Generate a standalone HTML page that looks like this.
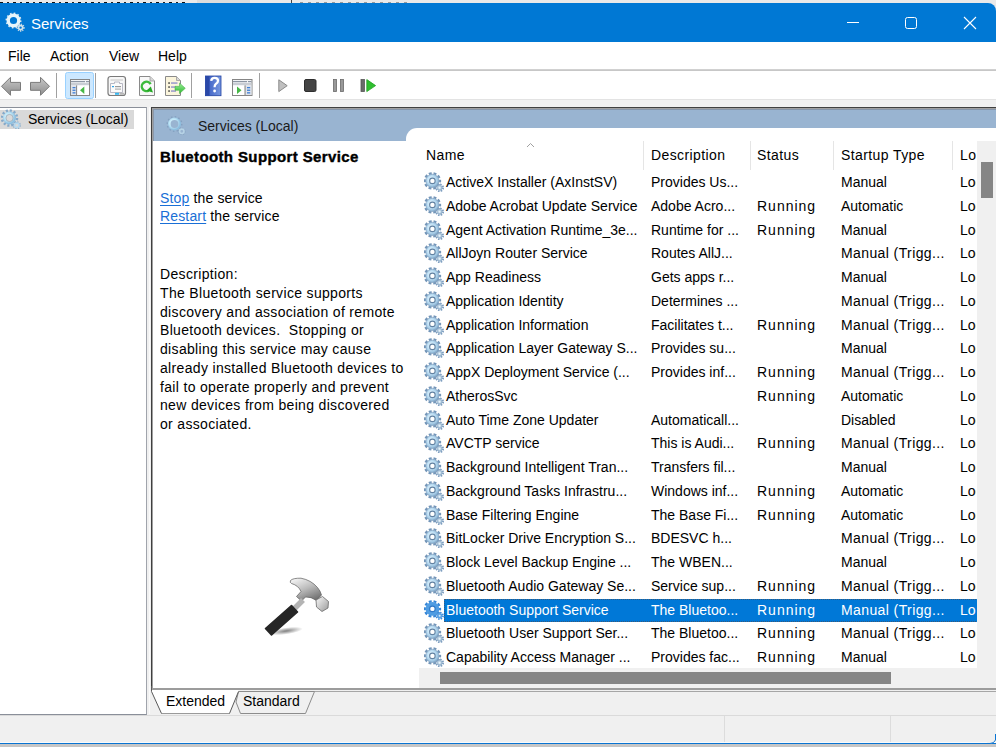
<!DOCTYPE html>
<html><head><meta charset="utf-8">
<style>
*{margin:0;padding:0;box-sizing:border-box}
html,body{width:996px;height:747px;overflow:hidden;background:#fff}
body{position:relative;font-family:"Liberation Sans",sans-serif;font-size:14px;color:#000}
.a{position:absolute}
#topstrip{left:0;top:0;width:996px;height:12px;background:#e9e9e9}
#title{left:0;top:3px;width:996px;height:39px;background:#0078d4;border-top-right-radius:8px;color:#fff}
#title .t{left:31px;top:11px;font-size:15px;line-height:20px;color:#fff}
#menu{left:0;top:42px;width:996px;height:28px;background:#fff}
#menu span{position:absolute;top:5px;line-height:18px}
#menuline{left:0;top:69px;width:996px;height:2px;background:linear-gradient(#d6d6d6,#c2c2c2)}
#toolbar{left:0;top:71px;width:996px;height:28px;background:#fff}
#tbline{left:0;top:99px;width:996px;height:1px;background:#e3e3e3}
#mid{left:0;top:100px;width:996px;height:615px;background:#f0f0f0}
#leftpane{left:0;top:107px;width:147px;height:608px;background:#fff;border-top:1px solid #8a8f99;border-right:1px solid #a0a4ac;border-bottom:1px solid #8a8f99}
#frame{left:151px;top:107px;width:845px;height:583px;border-left:1px solid #404040;border-top:1px solid #404040;background:#fff}
#frameinner{left:152px;top:108px;width:844px;height:582px;border-left:1px solid #a0a0a0;border-top:1px solid #a0a0a0}
#band{left:153px;top:109px;width:843px;height:32px;background:#99b4d1;border-top:1px solid #8595aa;border-left:1px solid #8a98aa}
#tabwhite{left:406px;top:128px;width:600px;height:40px;background:#fff;border-top-left-radius:11px}
.sep{position:absolute;width:1px;background:#a0a0a0}
.lst{left:419px;top:141px;width:558px;height:527px;background:#fff;overflow:hidden}
.row{position:absolute;left:0;width:558px;height:24px;line-height:24px;white-space:nowrap}
.row span{position:absolute;top:0}
.hdr{position:absolute;left:0;top:0;width:558px;height:29px}
.hdr span{position:absolute;top:5px;line-height:18px;white-space:nowrap;letter-spacing:0.4px}
.hsep{position:absolute;top:0;width:1px;height:29px;background:#e5e5e5}
.sel{position:absolute;left:25px;width:540px;background:#0078d7;outline:1px dotted #3a5a7a;outline-offset:-1px}
</style></head>
<body>
<svg width="0" height="0" style="position:absolute">
 <defs>
  <radialGradient id="gg" cx="0.42" cy="0.42" r="0.62">
   <stop offset="0" stop-color="#ffffff"/>
   <stop offset="0.45" stop-color="#c2e2f6"/>
   <stop offset="0.8" stop-color="#9cc3e0"/>
   <stop offset="1" stop-color="#7398bb"/>
  </radialGradient>
  <radialGradient id="gs" cx="0.45" cy="0.45" r="0.6">
   <stop offset="0" stop-color="#e6f3fb"/>
   <stop offset="1" stop-color="#7c9fbf"/>
  </radialGradient>
  <symbol id="gear" viewBox="0 0 20 20">
   <circle cx="8.4" cy="8.9" r="7.6" fill="none" stroke="#7395b8" stroke-width="2.3" stroke-dasharray="2.9 1.875" stroke-dashoffset="1.45"/>
   <circle cx="8.4" cy="8.9" r="6.6" fill="url(#gg)" stroke="#86a6c4" stroke-width="0.8"/>
   <circle cx="8.4" cy="8.9" r="3.3" fill="#6282a2"/>
   <circle cx="8.4" cy="8.9" r="2.2" fill="#fff"/>
   <circle cx="15.7" cy="15.8" r="3.4" fill="none" stroke="#7f9fc0" stroke-width="1.9" stroke-dasharray="1.5 1.17"/>
   <circle cx="15.7" cy="15.8" r="2.7" fill="url(#gs)"/>
   <circle cx="15.7" cy="15.8" r="0.9" fill="#e8f4fc"/>
  </symbol>
  <radialGradient id="rg" cx="0.4" cy="0.4" r="0.65">
   <stop offset="0" stop-color="#e8fbff"/>
   <stop offset="0.6" stop-color="#bfe6f7"/>
   <stop offset="1" stop-color="#8dbfe0"/>
  </radialGradient>
  <symbol id="gear2" viewBox="0 0 20 20">
   <circle cx="8.5" cy="9" r="7.5" fill="none" stroke="#86a9c9" stroke-width="2.6" stroke-dasharray="2.1 1.83"/>
   <circle cx="8.5" cy="9" r="5.1" fill="none" stroke="url(#rg)" stroke-width="2.8"/>
   <circle cx="8.5" cy="9" r="3.6" fill="none" stroke="#7890a8" stroke-width="0.7" stroke-opacity="0.7"/>
   <circle cx="15.8" cy="16.3" r="3.1" fill="none" stroke="#8fb1cf" stroke-width="2" stroke-dasharray="1.3 1.13"/>
   <circle cx="15.8" cy="16.3" r="2.2" fill="none" stroke="#b5d8ee" stroke-width="1.6"/>
  </symbol>
  <symbol id="gearw" viewBox="0 0 20 20">
   <circle cx="8.5" cy="8.5" r="7.1" fill="none" stroke="#d8e8f0" stroke-width="1.8" stroke-dasharray="1.6 2.12"/>
   <circle cx="8.5" cy="8.5" r="5.3" fill="none" stroke="#e6f5fb" stroke-width="3.4"/>
   <circle cx="15.6" cy="15.6" r="3.3" fill="none" stroke="#c8d8e2" stroke-width="1.6" stroke-dasharray="1.2 1.0"/>
   <circle cx="15.6" cy="15.6" r="2.0" fill="none" stroke="#d0e4ee" stroke-width="1.6"/>
  </symbol>
  <symbol id="gearb" viewBox="0 0 20 20">
   <circle cx="8.5" cy="9" r="7.2" fill="none" stroke="#7f9cbc" stroke-width="1.6" stroke-dasharray="1.5 2.27" stroke-opacity="0.8"/>
   <circle cx="8.5" cy="9" r="5.2" fill="none" stroke="url(#rg)" stroke-width="2.6"/>
   <circle cx="15.8" cy="16.3" r="3.1" fill="none" stroke="#87a5c2" stroke-width="1.6" stroke-dasharray="1.1 1.33"/>
   <circle cx="15.8" cy="16.3" r="2.2" fill="none" stroke="#b7d3e6" stroke-width="1.6"/>
  </symbol>
  <symbol id="gearsel" viewBox="0 0 20 20">
   <circle cx="8.4" cy="8.9" r="7.6" fill="none" stroke="#3585d6" stroke-width="2.3" stroke-dasharray="2.9 1.875" stroke-dashoffset="1.45"/>
   <circle cx="8.4" cy="8.9" r="6.9" fill="#4f9ce2"/>
   <circle cx="8.4" cy="8.9" r="3.3" fill="#2f78c8"/>
   <circle cx="8.4" cy="8.9" r="2.2" fill="#fff"/>
   <circle cx="15.7" cy="15.8" r="3.3" fill="none" stroke="#3d8ad8" stroke-width="1.8" stroke-dasharray="1.4 1.19"/>
   <circle cx="15.7" cy="15.8" r="2.8" fill="#5aa2e4"/>
   <circle cx="15.7" cy="15.8" r="1.0" fill="#d8ecfa"/>
  </symbol>
 </defs>
</svg>

<div class="a" id="topstrip"></div>
<div class="a" id="title">
 <svg class="a" style="left:4.6px;top:8.5px" width="20" height="20"><use href="#gearw"/></svg>
 <div class="a t">Services</div>
 <svg class="a" style="left:847px;top:19px" width="13" height="2"><rect x="0" y="0" width="12" height="1" fill="#fff"/></svg>
 <svg class="a" style="left:904px;top:13px" width="14" height="14"><rect x="1.5" y="1.5" width="11" height="11" rx="2" fill="none" stroke="#fff" stroke-width="1"/></svg>
 <svg class="a" style="left:963px;top:13px" width="14" height="14"><path d="M1 1L13 13M13 1L1 13" stroke="#fff" stroke-width="1.1"/></svg>
</div>

<div class="a" id="menu">
 <span style="left:8px">File</span>
 <span style="left:50px">Action</span>
 <span style="left:109px">View</span>
 <span style="left:158px">Help</span>
</div>
<div class="a" id="menuline"></div>
<div class="a" id="toolbar"></div>
<div class="a" id="tbline"></div>
<div class="a" id="mid"></div>

<div class="a" id="leftpane">
 <div class="a" style="left:0;top:2px;width:134px;height:19px;background:#d9d9d9"></div>
 <svg class="a" style="left:1.4px;top:1px" width="20" height="20"><use href="#gear2"/></svg>
 <div class="a" style="left:28px;top:3px;line-height:17px">Services (Local)</div>
</div>

<div class="a" style="left:149px;top:107px;width:1px;height:607px;background:#fafafa"></div>
<div class="a" id="frame"></div>
<div class="a" id="frameinner"></div>
<div class="a" id="band">
 <svg class="a" style="left:12.3px;top:5px" width="20" height="20"><use href="#gearb"/></svg>
 <div class="a" style="left:44px;top:7px;line-height:18px;color:#1a1a1a">Services (Local)</div>
</div>
<div class="a" id="tabwhite"></div>

<div class="a" style="left:160px;top:148px;font-weight:bold;font-size:15px;letter-spacing:0.38px;line-height:18px;-webkit-text-stroke:0.4px #000">Bluetooth Support Service</div>
<div class="a" style="left:160px;top:188.5px;line-height:18.75px;letter-spacing:0.15px;color:#000">
 <span style="color:#1a6fd6;text-decoration:underline;text-underline-offset:1.5px">Stop</span> the service<br>
 <span style="color:#1a6fd6;text-decoration:underline;text-underline-offset:1.5px">Restart</span> the service
</div>
<div class="a" style="left:160px;top:265px;line-height:18.75px;letter-spacing:0.33px;white-space:nowrap">
Description:<br>The Bluetooth service supports<br>discovery and association of remote<br>Bluetooth devices.&nbsp; Stopping or<br>disabling this service may cause<br>already installed Bluetooth devices to<br>fail to operate properly and prevent<br>new devices from being discovered<br>or associated.
</div>

<div class="a lst" id="list">
 <div class="hdr">
  <span style="left:7px">Name</span>
  <span style="left:232px">Description</span>
  <span style="left:338px">Status</span>
  <span style="left:422px">Startup Type</span>
  <span style="left:541px;width:16px;overflow:hidden">Log On As</span>
  <div class="hsep" style="left:224px"></div>
  <div class="hsep" style="left:331px"></div>
  <div class="hsep" style="left:414px"></div>
  <div class="hsep" style="left:533px"></div>
  <svg class="a" style="left:107px;top:1px" width="9" height="6"><path d="M1 5L4.5 1.5L8 5" fill="none" stroke="#a0a0a0" stroke-width="1"/></svg>
 </div>
 <div id="rows"><!--ROWS--><div class="row" style="top:29.0px"><svg class="a" style="left:5px;top:2px" width="20" height="20"><use href="#gear"/></svg><span style="left:27px">ActiveX Installer (AxInstSV)</span><span style="left:232px">Provides Us...</span><span style="left:338px"></span><span style="left:422px">Manual</span><span style="left:541px;width:16px;overflow:hidden">Local System</span></div>
<div class="row" style="top:52.8px"><svg class="a" style="left:5px;top:2px" width="20" height="20"><use href="#gear"/></svg><span style="left:27px">Adobe Acrobat Update Service</span><span style="left:232px">Adobe Acro...</span><span style="left:338px;letter-spacing:1px">Running</span><span style="left:422px">Automatic</span><span style="left:541px;width:16px;overflow:hidden">Local System</span></div>
<div class="row" style="top:76.5px"><svg class="a" style="left:5px;top:2px" width="20" height="20"><use href="#gear"/></svg><span style="left:27px">Agent Activation Runtime_3e...</span><span style="left:232px">Runtime for ...</span><span style="left:338px;letter-spacing:1px">Running</span><span style="left:422px">Manual</span><span style="left:541px;width:16px;overflow:hidden">Local System</span></div>
<div class="row" style="top:100.2px"><svg class="a" style="left:5px;top:2px" width="20" height="20"><use href="#gear"/></svg><span style="left:27px">AllJoyn Router Service</span><span style="left:232px">Routes AllJ...</span><span style="left:338px"></span><span style="left:422px;letter-spacing:0.4px">Manual (Trigg...</span><span style="left:541px;width:16px;overflow:hidden">Local System</span></div>
<div class="row" style="top:124.0px"><svg class="a" style="left:5px;top:2px" width="20" height="20"><use href="#gear"/></svg><span style="left:27px">App Readiness</span><span style="left:232px">Gets apps r...</span><span style="left:338px"></span><span style="left:422px">Manual</span><span style="left:541px;width:16px;overflow:hidden">Local System</span></div>
<div class="row" style="top:147.8px"><svg class="a" style="left:5px;top:2px" width="20" height="20"><use href="#gear"/></svg><span style="left:27px">Application Identity</span><span style="left:232px">Determines ...</span><span style="left:338px"></span><span style="left:422px;letter-spacing:0.4px">Manual (Trigg...</span><span style="left:541px;width:16px;overflow:hidden">Local System</span></div>
<div class="row" style="top:171.5px"><svg class="a" style="left:5px;top:2px" width="20" height="20"><use href="#gear"/></svg><span style="left:27px">Application Information</span><span style="left:232px">Facilitates t...</span><span style="left:338px;letter-spacing:1px">Running</span><span style="left:422px;letter-spacing:0.4px">Manual (Trigg...</span><span style="left:541px;width:16px;overflow:hidden">Local System</span></div>
<div class="row" style="top:195.2px"><svg class="a" style="left:5px;top:2px" width="20" height="20"><use href="#gear"/></svg><span style="left:27px">Application Layer Gateway S...</span><span style="left:232px">Provides su...</span><span style="left:338px"></span><span style="left:422px">Manual</span><span style="left:541px;width:16px;overflow:hidden">Local System</span></div>
<div class="row" style="top:219.0px"><svg class="a" style="left:5px;top:2px" width="20" height="20"><use href="#gear"/></svg><span style="left:27px">AppX Deployment Service (...</span><span style="left:232px">Provides inf...</span><span style="left:338px;letter-spacing:1px">Running</span><span style="left:422px;letter-spacing:0.4px">Manual (Trigg...</span><span style="left:541px;width:16px;overflow:hidden">Local System</span></div>
<div class="row" style="top:242.8px"><svg class="a" style="left:5px;top:2px" width="20" height="20"><use href="#gear"/></svg><span style="left:27px">AtherosSvc</span><span style="left:232px"></span><span style="left:338px;letter-spacing:1px">Running</span><span style="left:422px">Automatic</span><span style="left:541px;width:16px;overflow:hidden">Local System</span></div>
<div class="row" style="top:266.5px"><svg class="a" style="left:5px;top:2px" width="20" height="20"><use href="#gear"/></svg><span style="left:27px">Auto Time Zone Updater</span><span style="left:232px">Automaticall...</span><span style="left:338px"></span><span style="left:422px">Disabled</span><span style="left:541px;width:16px;overflow:hidden">Local System</span></div>
<div class="row" style="top:290.2px"><svg class="a" style="left:5px;top:2px" width="20" height="20"><use href="#gear"/></svg><span style="left:27px">AVCTP service</span><span style="left:232px">This is Audi...</span><span style="left:338px;letter-spacing:1px">Running</span><span style="left:422px;letter-spacing:0.4px">Manual (Trigg...</span><span style="left:541px;width:16px;overflow:hidden">Local System</span></div>
<div class="row" style="top:314.0px"><svg class="a" style="left:5px;top:2px" width="20" height="20"><use href="#gear"/></svg><span style="left:27px">Background Intelligent Tran...</span><span style="left:232px">Transfers fil...</span><span style="left:338px"></span><span style="left:422px">Manual</span><span style="left:541px;width:16px;overflow:hidden">Local System</span></div>
<div class="row" style="top:337.8px"><svg class="a" style="left:5px;top:2px" width="20" height="20"><use href="#gear"/></svg><span style="left:27px">Background Tasks Infrastru...</span><span style="left:232px">Windows inf...</span><span style="left:338px;letter-spacing:1px">Running</span><span style="left:422px">Automatic</span><span style="left:541px;width:16px;overflow:hidden">Local System</span></div>
<div class="row" style="top:361.5px"><svg class="a" style="left:5px;top:2px" width="20" height="20"><use href="#gear"/></svg><span style="left:27px">Base Filtering Engine</span><span style="left:232px">The Base Fi...</span><span style="left:338px;letter-spacing:1px">Running</span><span style="left:422px">Automatic</span><span style="left:541px;width:16px;overflow:hidden">Local System</span></div>
<div class="row" style="top:385.2px"><svg class="a" style="left:5px;top:2px" width="20" height="20"><use href="#gear"/></svg><span style="left:27px">BitLocker Drive Encryption S...</span><span style="left:232px">BDESVC h...</span><span style="left:338px"></span><span style="left:422px;letter-spacing:0.4px">Manual (Trigg...</span><span style="left:541px;width:16px;overflow:hidden">Local System</span></div>
<div class="row" style="top:409.0px"><svg class="a" style="left:5px;top:2px" width="20" height="20"><use href="#gear"/></svg><span style="left:27px">Block Level Backup Engine ...</span><span style="left:232px">The WBEN...</span><span style="left:338px"></span><span style="left:422px">Manual</span><span style="left:541px;width:16px;overflow:hidden">Local System</span></div>
<div class="row" style="top:432.8px"><svg class="a" style="left:5px;top:2px" width="20" height="20"><use href="#gear"/></svg><span style="left:27px">Bluetooth Audio Gateway Se...</span><span style="left:232px">Service sup...</span><span style="left:338px;letter-spacing:1px">Running</span><span style="left:422px;letter-spacing:0.4px">Manual (Trigg...</span><span style="left:541px;width:16px;overflow:hidden">Local System</span></div>
<div class="sel" style="top:458.0px;height:23px"></div>
<div class="row" style="color:#fff;top:456.5px"><svg class="a" style="left:5px;top:2px" width="20" height="20"><use href="#gearsel"/></svg><span style="left:27px">Bluetooth Support Service</span><span style="left:232px">The Bluetoo...</span><span style="left:338px;letter-spacing:1px">Running</span><span style="left:422px;letter-spacing:0.4px">Manual (Trigg...</span><span style="left:541px;width:16px;overflow:hidden">Local System</span></div>
<div class="row" style="top:480.2px"><svg class="a" style="left:5px;top:2px" width="20" height="20"><use href="#gear"/></svg><span style="left:27px">Bluetooth User Support Ser...</span><span style="left:232px">The Bluetoo...</span><span style="left:338px;letter-spacing:1px">Running</span><span style="left:422px;letter-spacing:0.4px">Manual (Trigg...</span><span style="left:541px;width:16px;overflow:hidden">Local System</span></div>
<div class="row" style="top:504.0px"><svg class="a" style="left:5px;top:2px" width="20" height="20"><use href="#gear"/></svg><span style="left:27px">Capability Access Manager ...</span><span style="left:232px">Provides fac...</span><span style="left:338px;letter-spacing:1px">Running</span><span style="left:422px">Manual</span><span style="left:541px;width:16px;overflow:hidden">Local System</span></div><!--/ROWS--></div>
</div>

<!--EXTRA-->
<div class="a" style="left:0;top:2px;width:185px;height:1px;background:repeating-linear-gradient(90deg,#111 0 3px,transparent 3px 7px,#222 7px 9px,transparent 9px 13px)"></div>
<div class="a" style="left:197px;top:0;width:53px;height:3px;background:#dcdcdc"></div>
<div class="a" style="left:291px;top:0;width:1px;height:3px;background:#444"></div>
<div class="a" style="left:300px;top:2px;width:110px;height:1px;background:repeating-linear-gradient(90deg,#999 0 3px,transparent 3px 8px)"></div>

<!-- toolbar icons -->
<svg class="a" style="left:0;top:71px" width="400" height="28">
 <defs>
  <linearGradient id="arr" x1="0" y1="0" x2="0" y2="1"><stop offset="0" stop-color="#c8c8c8"/><stop offset="1" stop-color="#8e8e8e"/></linearGradient>
  <linearGradient id="hb" x1="0" y1="0" x2="1" y2="0"><stop offset="0" stop-color="#3558c0"/><stop offset="1" stop-color="#7898e0"/></linearGradient>
  <linearGradient id="ga" x1="0" y1="0" x2="0" y2="1"><stop offset="0" stop-color="#9ef09e"/><stop offset="1" stop-color="#2cb82c"/></linearGradient>
 </defs>
 <path d="M1.5 15.3L10.5 6.3V11.4H20.5V19.3H10.5V24.3Z" fill="url(#arr)" stroke="#7a7a7a" stroke-width="1"/>
 <path d="M49.5 15.3L40.5 6.3V11.4H30.5V19.3H40.5V24.3Z" fill="url(#arr)" stroke="#7a7a7a" stroke-width="1"/>
 <rect x="56" y="2" width="1" height="25" fill="#a0a0a0"/>
 <rect x="65.5" y="1.5" width="28" height="26" rx="2" fill="#cce8ff" stroke="#99d1ff"/>
 <rect x="70.5" y="8.5" width="19" height="16" fill="#f2f3f5" stroke="#858585"/>
 <rect x="71" y="10" width="14" height="1.2" fill="#8c95a3"/><rect x="86" y="10" width="3" height="1.2" fill="#8c95a3"/>
 <rect x="71" y="12" width="18" height="2.4" fill="#c9cdd4"/>
 <rect x="71" y="14.4" width="5" height="9.6" fill="#dfe3ea"/>
 <rect x="76" y="14.4" width="1.3" height="9.6" fill="#8c8c8c"/>
 <rect x="72.5" y="16" width="3" height="1.3" fill="#3f7fd6"/><rect x="72.5" y="18.6" width="3" height="1.3" fill="#3f7fd6"/><rect x="72.5" y="21.2" width="3" height="1.3" fill="#3f7fd6"/>
 <rect x="77.3" y="14.4" width="11.7" height="9.6" fill="#fff"/>
 <path d="M80 19.2L84.3 15.4V23Z" fill="#46b846"/>
 <rect x="95" y="2" width="1" height="25" fill="#a0a0a0"/>
 <rect x="108" y="5.5" width="17.5" height="19" rx="2.5" fill="#f7f7f7" stroke="#7a7a7a" stroke-width="1.2"/>
 <rect x="110.5" y="8" width="12.5" height="2" fill="#dedede"/>
 <path d="M110.5 12.5H114.5V11H119.5V12.5H122.5V21.5H110.5Z" fill="#fbfbfb" stroke="#a8a8b8" stroke-width="0.8"/>
 <rect x="112" y="15" width="2" height="1.2" fill="#2fa3e6"/><rect x="115" y="15" width="6" height="1.2" fill="#9a9a9a"/>
 <rect x="115" y="17.5" width="6" height="1.2" fill="#b0b0b0"/>
 <rect x="115" y="21.8" width="4" height="2" fill="#38b8f0"/><rect x="119.5" y="21.8" width="4.5" height="2" fill="#b8b8b8"/>
 <path d="M139.5 5.5H150L154.5 10V24.5H139.5Z" fill="#f8f8f8" stroke="#8a8a8a"/>
 <path d="M150 5.5V10H154.5" fill="#d8d8d8" stroke="#9a9a9a" stroke-width="0.8"/>
 <path d="M150.6 13.2A4.7 4.7 0 1 0 148.7 19.6" fill="none" stroke="#3cba3c" stroke-width="2.4"/>
 <path d="M146.5 19.8L153 21.5L150.8 15.5Z" fill="#25a825"/>
 <path d="M165.5 5.5H176.5L180.5 9.5V24.5H165.5Z" fill="#fbf5dc" stroke="#8a8a8a"/>
 <path d="M176.5 5.5V9.5H180.5" fill="#d8d8d8" stroke="#9a9a9a" stroke-width="0.8"/>
 <rect x="168.3" y="11.3" width="1.5" height="1.5" fill="#333"/><rect x="171" y="11.4" width="6.5" height="1.3" fill="#8a8ac8"/>
 <rect x="168.3" y="15.3" width="1.5" height="1.5" fill="#333"/><rect x="171" y="15.4" width="5" height="1.3" fill="#8a8ac8"/>
 <rect x="168.3" y="19.3" width="1.5" height="1.5" fill="#333"/><rect x="171" y="19.4" width="5" height="1.3" fill="#8a8ac8"/>
 <path d="M175 15.3H179.5V12L185.3 17.3L179.5 22.6V19.3H175Z" fill="url(#ga)" stroke="#3aa83a" stroke-width="0.5"/>
 <rect x="191" y="2" width="1" height="25" fill="#a0a0a0"/>
 <rect x="205.5" y="5" width="15.5" height="19.7" fill="url(#hb)" stroke="#2040a0" stroke-width="0.8"/>
 <rect x="205.5" y="5" width="4" height="19.7" fill="#2a48a8"/>
 <path d="M211.2 9.8Q211.5 6.8 214.6 6.8Q218 6.8 218 9.8Q218 11.8 215.8 13Q214.6 13.8 214.6 16.3" fill="none" stroke="#fff" stroke-width="2.3"/>
 <circle cx="214.6" cy="20" r="1.4" fill="#fff"/>
 <rect x="232.5" y="8.5" width="19.5" height="16" fill="#f2f3f5" stroke="#858585"/>
 <rect x="233" y="10" width="14" height="1.2" fill="#8c95a3"/><rect x="248" y="10" width="3.5" height="1.2" fill="#8c95a3"/>
 <rect x="233" y="12" width="18.5" height="2.4" fill="#c9cdd4"/>
 <rect x="233" y="14.4" width="11.5" height="9.6" fill="#fff"/>
 <path d="M237 15.4V23L241.5 19.2Z" fill="#46b846"/>
 <rect x="244.5" y="14.4" width="1.3" height="9.6" fill="#8c8c8c"/>
 <rect x="245.8" y="14.4" width="5.7" height="9.6" fill="#dfe3ea"/>
 <rect x="247" y="16" width="3.2" height="1.3" fill="#3f7fd6"/><rect x="247" y="18.6" width="3.2" height="1.3" fill="#3f7fd6"/><rect x="247" y="21.2" width="3.2" height="1.3" fill="#3f7fd6"/>
 <rect x="259" y="2" width="1" height="25" fill="#a0a0a0"/>
 <path d="M278.8 8.8L287.2 14.7L278.8 20.6Z" fill="#c0c0c0" stroke="#8a8a8a"/>
 <rect x="304.5" y="8.5" width="11.5" height="12" rx="1.5" fill="#444" stroke="#2e2e2e"/>
 <rect x="333.5" y="8.5" width="3" height="12" fill="#999" stroke="#6a6a6a" stroke-width="0.8"/>
 <rect x="340.5" y="8.5" width="3" height="12" fill="#999" stroke="#6a6a6a" stroke-width="0.8"/>
 <rect x="361" y="8.5" width="3.4" height="12" fill="#6a6a6a" stroke="#555" stroke-width="0.8"/>
 <path d="M366.8 8.6L375.6 14.6L366.8 20.6Z" fill="#2fbf2f" stroke="#1f9f1f" stroke-width="0.8"/>
</svg>

<!-- vertical scrollbar -->
<div class="a" style="left:977px;top:141px;width:19px;height:548px;background:#f0f0f0"></div>
<div class="a" style="left:981px;top:162px;width:12px;height:36px;background:#858585"></div>
<!-- horizontal scrollbar -->
<div class="a" style="left:419px;top:668px;width:577px;height:20px;background:#f0f0f0"></div>
<div class="a" style="left:440px;top:672px;width:451px;height:12px;background:#858585"></div>

<!-- tab strip -->
<svg class="a" style="left:140px;top:686px" width="856" height="30">
 <rect x="13" y="2" width="843" height="2" fill="#9c9c9c"/>
 <rect x="11" y="4" width="845" height="1" fill="#f0f0f0"/>
 <path d="M98.5 5.5H856" fill="none" stroke="#a6a6a6"/>
 <path d="M96 16L98.5 5.5H174.5L165.5 27.5H100.5Z" fill="#f0f0f0" stroke="#8c8c8c"/>
 <path d="M11.5 4H98.5V5.5L89.5 27.5H21.5L11.5 5Z" fill="#fff"/>
 <path d="M11.5 0V5.5L21.5 27.5H89.5L98.5 5.5" fill="none" stroke="#5a5a5a"/>
 <path d="M21.5 27.5H89.5" fill="none" stroke="#9a9a9a"/>
 <text x="26" y="20" font-family="Liberation Sans" font-size="14" fill="#000">Extended</text>
 <text x="103" y="20" font-family="Liberation Sans" font-size="14" fill="#000">Standard</text>
</svg>

<!-- status bar -->
<div class="a" style="left:0;top:715px;width:996px;height:27px;background:#f0f0f0;border-top:1px solid #dadada"></div>
<div class="a" style="left:724px;top:716px;width:1px;height:26px;background:#dcdcdc"></div>
<div class="a" style="left:890px;top:716px;width:1px;height:26px;background:#dcdcdc"></div>
<div class="a" style="left:0;top:742px;width:996px;height:1px;background:#fafafa"></div>
<div class="a" style="left:0;top:744px;width:996px;height:3px;background:#c6c6c6"></div>
<div class="a" style="left:0;top:743px;width:996px;height:1px;background:#0a74d2"></div>
<svg class="a" style="left:986px;top:734px" width="10" height="10"><path d="M0 9.5H4Q8 9.5 9.5 6V0" fill="#f0f0f0" stroke="#0a74d2"/></svg>

<!-- hammer -->
<svg class="a" style="left:250px;top:565px" width="90" height="80">
 <defs>
  <linearGradient id="hm" x1="0.2" y1="0" x2="0.8" y2="1"><stop offset="0" stop-color="#f2f2f2"/><stop offset="0.45" stop-color="#bdbdbd"/><stop offset="1" stop-color="#6a6a6a"/></linearGradient>
  <linearGradient id="hf" x1="0" y1="0" x2="1" y2="1"><stop offset="0" stop-color="#fafafa"/><stop offset="1" stop-color="#9a9a9a"/></linearGradient>
  <radialGradient id="sh" cx="0.5" cy="0.5" r="0.5"><stop offset="0" stop-color="#000" stop-opacity="0.5"/><stop offset="1" stop-color="#000" stop-opacity="0"/></radialGradient>
 </defs>
 <ellipse cx="36" cy="66" rx="17" ry="3.5" fill="url(#sh)" transform="rotate(-8 36 66)"/>
 <path d="M40.5 15.5 Q43 13 51 13.2 Q61 15 67.5 22.5 Q70.5 26 71.5 30 L66.5 35.5 Q61 31.5 55.5 32 L51.5 36 L46.5 31.5 L51 26.5 Q48.5 20.5 41.5 18.5 Q39.5 17.5 40.5 15.5Z" fill="url(#hm)" stroke="#5a5a5a" stroke-width="0.7"/>
 <path d="M66 35 L72.5 31.5 L78.5 36.5 L78 43 L72 46.5 L66.5 42Z" fill="url(#hf)" stroke="#6a6a6a" stroke-width="0.8"/>
 <path d="M44 44 L53 35" stroke="#b4b4b4" stroke-width="5.5"/>
 <path d="M15.5 63.5 L41.5 40.5 L47.5 47 L21.5 70Z" fill="#262626" stroke="#262626" stroke-width="1.6" stroke-linejoin="round"/>
</svg>
<!--/EXTRA-->

</body></html>
